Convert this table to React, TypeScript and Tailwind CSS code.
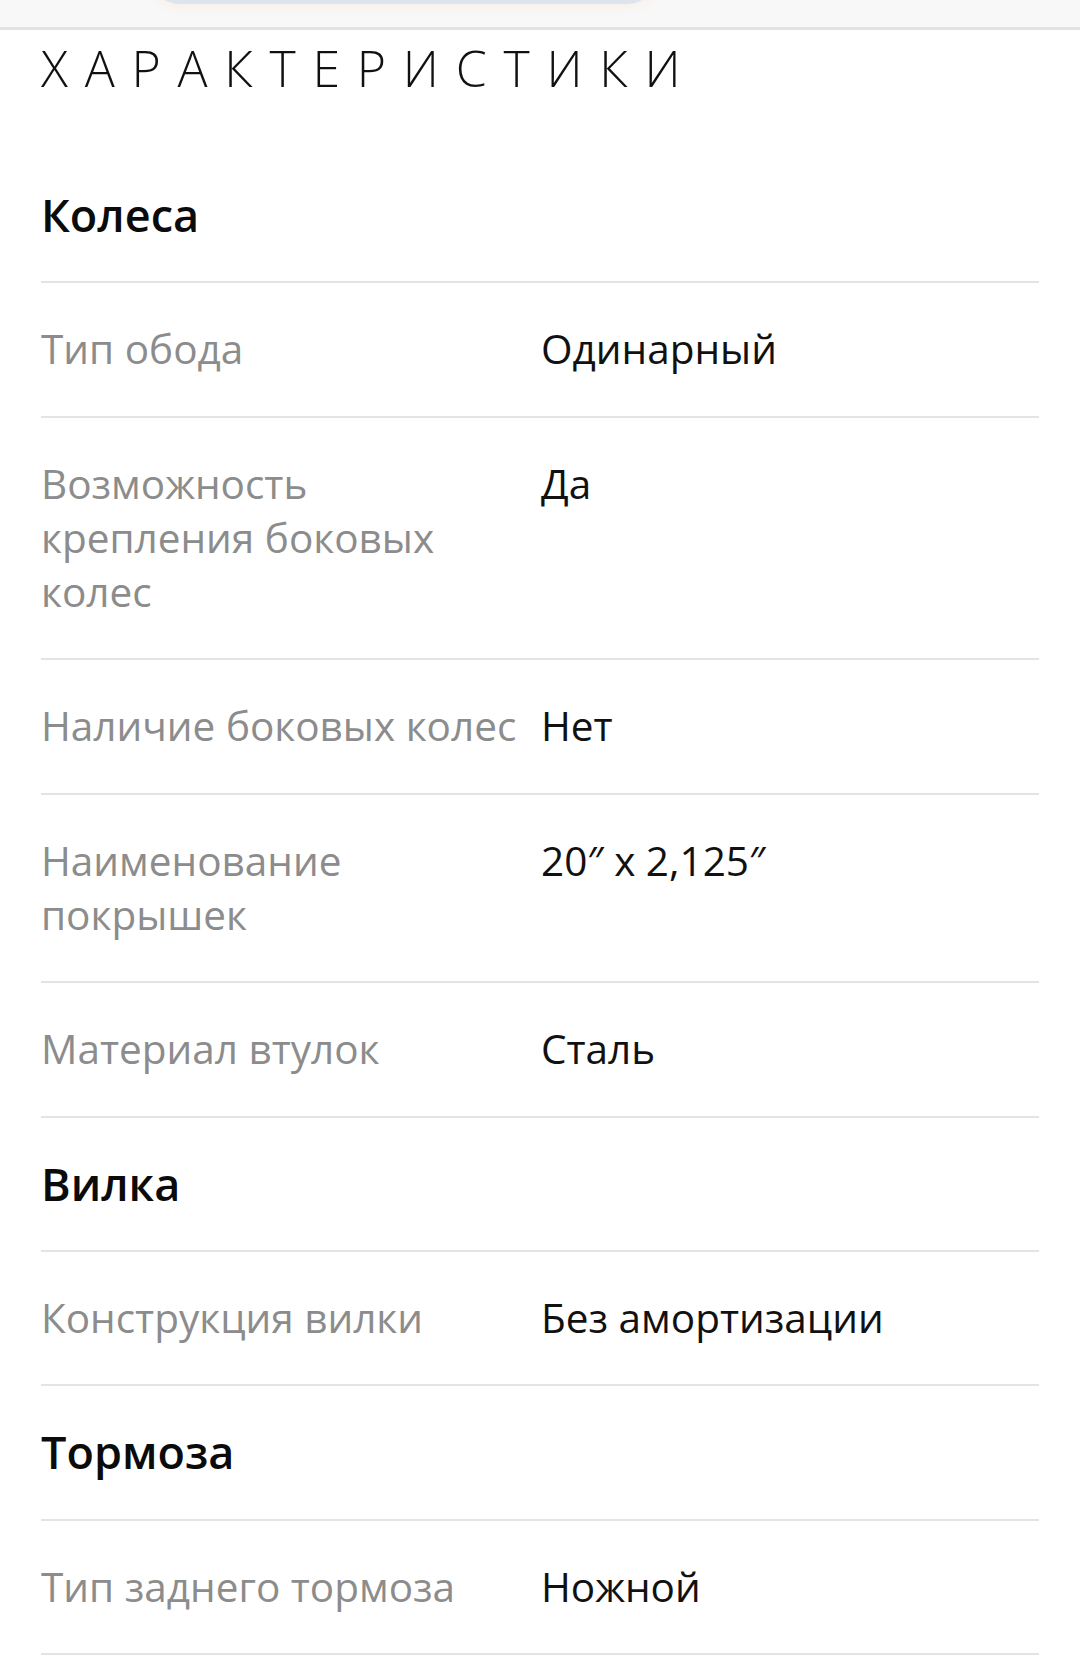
type Row =
  | { kind: 'group'; title: string }
  | { kind: 'spec'; label: string[]; value: string };

const rows: Row[] = [
  { kind: 'group', title: 'Колеса' },
  { kind: 'spec', label: ['Тип обода'], value: 'Одинарный' },
  { kind: 'spec', label: ['Возможность', 'крепления боковых', 'колес'], value: 'Да' },
  { kind: 'spec', label: ['Наличие боковых колес'], value: 'Нет' },
  { kind: 'spec', label: ['Наименование', 'покрышек'], value: '20″ x 2,125″' },
  { kind: 'spec', label: ['Материал втулок'], value: 'Сталь' },
  { kind: 'group', title: 'Вилка' },
  { kind: 'spec', label: ['Конструкция вилки'], value: 'Без амортизации' },
  { kind: 'group', title: 'Тормоза' },
  { kind: 'spec', label: ['Тип заднего тормоза'], value: 'Ножной' },
];

export default function App() {
  return (
    <div className="min-h-[1676px] w-[1080px] bg-white font-['Open_Sans',sans-serif]">
      {/* sticky bar, only its lower edge is on screen */}
      <div className="h-[30px] overflow-hidden border-b-[3px] border-[#e3e3e3] bg-[#f8f8f8]">
        <div className="-mt-[56px] ml-[150px] h-[60px] w-[507px] rounded-[30px] bg-[#dde4ec] shadow-[0_4px_10px_rgba(255,190,140,0.12)]" />
      </div>

      <div className="px-[41px]">
        <h2 className="pt-[13px] pb-[56px] text-[50px] leading-[50px] font-light tracking-[0.335em] text-[#111]">
          ХАРАКТЕРИСТИКИ
        </h2>

        {rows.map((r, i) => {
          if (r.kind === 'group') {
            return (
              <div
                key={i}
                className="border-b-2 border-[#e4e4e4] py-[39px] text-[45px] leading-[54.3px] font-semibold text-[#0b0b0b]"
              >
                {r.title}
              </div>
            );
          }
          return (
            <div key={i} className="flex border-b-2 border-[#e4e4e4] py-[39px] text-[40.5px] leading-[54.3px]">
              <div className="w-[500px] shrink-0 whitespace-nowrap text-[#8c8c8c]">
                {r.label.map((l, j) => (
                  <div key={j}>{l}</div>
                ))}
              </div>
              <div className="whitespace-nowrap text-[#111]">{r.value}</div>
            </div>
          );
        })}
      </div>
    </div>
  );
}
